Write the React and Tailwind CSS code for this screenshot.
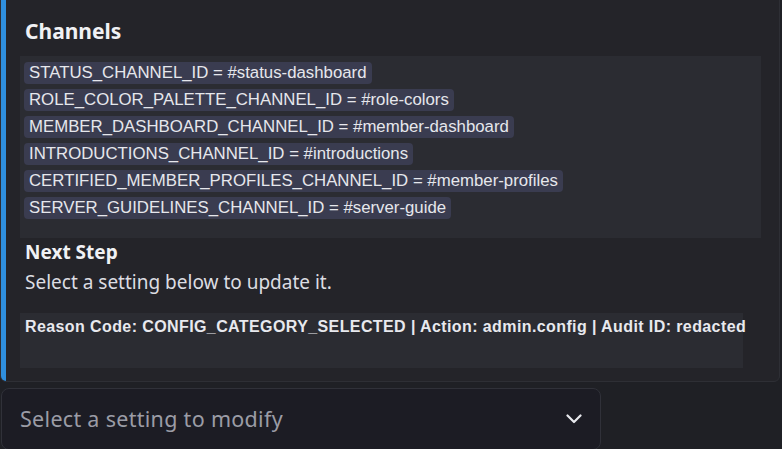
import React from "react";

const channels = [
  ["STATUS_CHANNEL_ID", "#status-dashboard"],
  ["ROLE_COLOR_PALETTE_CHANNEL_ID", "#role-colors"],
  ["MEMBER_DASHBOARD_CHANNEL_ID", "#member-dashboard"],
  ["INTRODUCTIONS_CHANNEL_ID", "#introductions"],
  ["CERTIFIED_MEMBER_PROFILES_CHANNEL_ID", "#member-profiles"],
  ["SERVER_GUIDELINES_CHANNEL_ID", "#server-guide"],
];

export default function App() {
  return (
    <div className="w-[782px] h-[449px] overflow-hidden bg-[#1f2025] flex flex-col">
      {/* embed card */}
      <div className="mt-[-6px] mr-[2px] h-[388px] shrink-0 flex rounded-[6px] border border-[#2e2f35] bg-[#242429] overflow-hidden">
        <div className="w-[5px] shrink-0 bg-[#2f8fde]" />
        <div className="flex-1 pl-[14px] pt-[23px] pr-[14px]">
          <div className="pl-[5px] text-[21px] leading-[26px] font-bold text-[#f0f1f4] font-['Noto_Sans',sans-serif]">
            Channels
          </div>
          <div className="mt-[12px] w-[741px] h-[182px] bg-[#2b2c32] pt-[6px] pl-[4px] flex flex-col gap-[5px] items-start">
            {channels.map(([k, v]) => (
              <div
                key={k}
                className="h-[22px] px-[5px] rounded-[4px] bg-[#3a3c50] text-[#e6e7ec] text-[16.8px] leading-[22px] font-['Liberation_Sans',Arial,sans-serif] whitespace-nowrap"
              >
                {k} = {v}
              </div>
            ))}
          </div>
          <div className="mt-[2px] pl-[5px] text-[19px] leading-[24px] font-bold text-[#f0f1f4] font-['Noto_Sans',sans-serif]">
            Next Step
          </div>
          <div className="mt-[6px] pl-[5px] text-[19px] leading-[24px] text-[#dcdde2] font-['Noto_Sans',sans-serif]">
            Select a setting below to update it.
          </div>
          <div className="mt-[19px] w-[723px] h-[55px] bg-[#2b2c32] pl-[5px] pt-[4px]">
            <div className="whitespace-nowrap text-[16px] leading-[20px] tracking-[0.4px] font-bold text-[#e8e9ee] font-['Liberation_Sans',Arial,sans-serif]">
              Reason Code: CONFIG_CATEGORY_SELECTED | Action: admin.config | Audit ID: redacted
            </div>
          </div>
        </div>
      </div>
      {/* select menu */}
      <div className="mt-[6px] ml-[1px] w-[600px] h-[62px] shrink-0 rounded-[8px] border border-[#303139] bg-[#1c1c24] flex items-center pl-[18px] pr-[18px]">
        <span className="flex-1 text-[21.5px] tracking-[0.3px] text-[#9b9ca6] font-['Noto_Sans',sans-serif]">
          Select a setting to modify
        </span>
        <svg width="16" height="10" viewBox="0 0 16 10" fill="none" stroke="#e8e9ee" strokeWidth="2.2" strokeLinecap="round" strokeLinejoin="round">
          <path d="M1.5 1.5L8 8l6.5-6.5" />
        </svg>
      </div>
    </div>
  );
}
